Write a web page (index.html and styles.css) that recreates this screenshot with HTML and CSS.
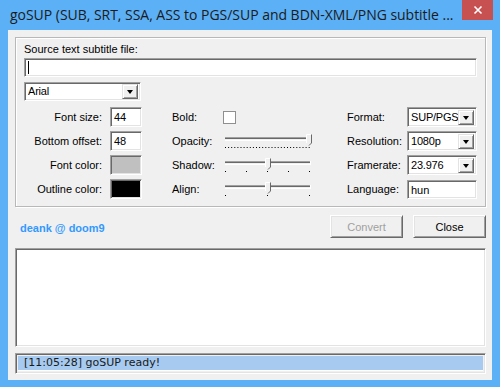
FILE: index.html
```html
<!DOCTYPE html>
<html>
<head>
<meta charset="utf-8">
<link rel="stylesheet" href="styles.css">
</head>
<body>
<div class="window">
  <div class="titlebar">
    <div class="title">goSUP (SUB, SRT, SSA, ASS to PGS/SUP and BDN-XML/PNG subtitle ...</div>
    <div class="close-btn">
      <svg width="10" height="10" viewBox="0 0 10 10"><path d="M1.5 1.5 L8.5 8.5 M8.5 1.5 L1.5 8.5" stroke="#fff" stroke-width="1.6"/></svg>
    </div>
  </div>
  <div class="client">
    <div class="group">
      <div class="src-label">Source text subtitle file:</div>
      <div class="sunken src-input"><span class="caret"></span></div>
      <div class="sunken combo font-combo"><span class="combo-text">Arial</span><span class="combo-btn"><span class="tri"></span></span></div>
      <div class="grid">
        <div class="lbl-r">Font size:</div>
        <div class="sunken small-box">44</div>
        <div class="lbl-m">Bold:</div>
        <div class="ctl-m"><div class="checkbox"></div></div>
        <div class="lbl-rr">Format:</div>
        <div class="sunken combo right-combo"><span class="combo-text">SUP/PGS</span><span class="combo-btn"><span class="tri"></span></span></div>

        <div class="lbl-r">Bottom offset:</div>
        <div class="sunken small-box">48</div>
        <div class="lbl-m">Opacity:</div>
        <div class="ctl-m">
          <svg class="slider" width="90" height="18" viewBox="0 0 90 18">
            <line x1="2" y1="3.5" x2="87" y2="3.5" stroke="#a0a0a0"/>
            <line x1="2" y1="4.5" x2="87" y2="4.5" stroke="#696969"/>
            <line x1="2" y1="6.5" x2="87" y2="6.5" stroke="#ffffff"/>
            <line x1="87.5" y1="3" x2="87.5" y2="7" stroke="#ffffff"/>
            <line x1="2" y1="13.5" x2="87" y2="13.5" stroke="#000" stroke-dasharray="1 2.1"/>
            <path d="M83.5 8.5 V0.5 H88 V8.5 L86 10.5 Z" fill="#f0f0f0"/>
            <path d="M83.5 9 V0.5 H88" fill="none" stroke="#ffffff"/>
            <path d="M88.5 0.5 V9 L86 11.5" fill="none" stroke="#696969"/>
          </svg>
        </div>
        <div class="lbl-rr">Resolution:</div>
        <div class="sunken combo right-combo"><span class="combo-text">1080p</span><span class="combo-btn"><span class="tri"></span></span></div>

        <div class="lbl-r">Font color:</div>
        <div class="sunken small-box color-gray"></div>
        <div class="lbl-m">Shadow:</div>
        <div class="ctl-m">
          <svg class="slider" width="90" height="18" viewBox="0 0 90 18">
            <line x1="2" y1="3.5" x2="87" y2="3.5" stroke="#a0a0a0"/>
            <line x1="2" y1="4.5" x2="87" y2="4.5" stroke="#696969"/>
            <line x1="2" y1="6.5" x2="87" y2="6.5" stroke="#ffffff"/>
            <line x1="87.5" y1="3" x2="87.5" y2="7" stroke="#ffffff"/>
            <g fill="#000"><rect x="2" y="13" width="1" height="1"/><rect x="23" y="13" width="1" height="1"/><rect x="44" y="13" width="1" height="1"/><rect x="65" y="13" width="1" height="1"/><rect x="86" y="13" width="1" height="1"/></g>
            <path d="M42.5 8.5 V0.5 H47 V8.5 L45 10.5 Z" fill="#f0f0f0"/>
            <path d="M42.5 9 V0.5 H47" fill="none" stroke="#ffffff"/>
            <path d="M47.5 0.5 V9 L45 11.5" fill="none" stroke="#696969"/>
          </svg>
        </div>
        <div class="lbl-rr">Framerate:</div>
        <div class="sunken combo right-combo"><span class="combo-text">23.976</span><span class="combo-btn"><span class="tri"></span></span></div>

        <div class="lbl-r">Outline color:</div>
        <div class="sunken small-box color-black"></div>
        <div class="lbl-m">Align:</div>
        <div class="ctl-m">
          <svg class="slider" width="90" height="18" viewBox="0 0 90 18">
            <line x1="2" y1="3.5" x2="87" y2="3.5" stroke="#a0a0a0"/>
            <line x1="2" y1="4.5" x2="87" y2="4.5" stroke="#696969"/>
            <line x1="2" y1="6.5" x2="87" y2="6.5" stroke="#ffffff"/>
            <line x1="87.5" y1="3" x2="87.5" y2="7" stroke="#ffffff"/>
            <g fill="#000"><rect x="2" y="13" width="1" height="1"/><rect x="44" y="13" width="1" height="1"/><rect x="86" y="13" width="1" height="1"/></g>
            <path d="M42.5 8.5 V0.5 H47 V8.5 L45 10.5 Z" fill="#f0f0f0"/>
            <path d="M42.5 9 V0.5 H47" fill="none" stroke="#ffffff"/>
            <path d="M47.5 0.5 V9 L45 11.5" fill="none" stroke="#696969"/>
          </svg>
        </div>
        <div class="lbl-rr">Language:</div>
        <div class="sunken lang-input">hun</div>
      </div>
    </div>
    <div class="action-row">
      <div class="link">deank @ doom9</div>
      <div class="btn disabled">Convert</div>
      <div class="btn">Close</div>
    </div>
    <div class="sunken log"></div>
    <div class="status"><div class="status-inner">[11:05:28] goSUP ready!</div></div>
  </div>
</div>
</body>
</html>
```

FILE: styles.css
```css
html, body {
  margin: 0;
  padding: 0;
}
body {
  width: 500px;
  height: 387px;
  background: #5cb0f6;
  font-family: "Liberation Sans", Arial, sans-serif;
  font-size: 11px;
  color: #000;
  overflow: hidden;
}
.window {
  width: 500px;
  height: 387px;
}
.titlebar {
  height: 30px;
  display: flex;
  align-items: flex-start;
}
.title {
  flex: 1;
  padding-left: 10px;
  line-height: 30px;
  font-family: "Open Sans", "Noto Sans", sans-serif;
  font-size: 14px;
  letter-spacing: -0.03px;
  color: #1b1b1b;
  white-space: nowrap;
}
.close-btn {
  width: 31px;
  height: 20px;
  margin-right: 7px;
  background: #c75050;
  display: flex;
  align-items: center;
  justify-content: center;
}
.close-btn svg { display: block; }
.client {
  margin: 0 8px;
  height: 350px;
  background: #f0f0f0;
  padding: 7px 6px 0 7px;
  box-sizing: border-box;
}
.group {
  height: 170px;
  box-sizing: border-box;
  border: 1px solid #b8b8b8;
  box-shadow: inset 1px 1px 0 #fff, 1px 1px 0 #fff;
  padding: 4px 8px 0 8px;
}
.src-label {
  height: 14px;
  line-height: 14px;
  margin-bottom: 2px;
}
.sunken {
  box-sizing: border-box;
  background: #fff;
  border: 1px solid;
  border-color: #a0a0a0 #fff #fff #a0a0a0;
  box-shadow: inset 1px 1px 0 #696969, inset -1px -1px 0 #e3e3e3;
}
.src-input {
  width: 453px;
  height: 19px;
  position: relative;
}
.caret {
  position: absolute;
  left: 3px;
  top: 2px;
  width: 1px;
  height: 13px;
  background: #000;
}
.combo {
  display: flex;
  align-items: center;
  height: 19px;
  padding: 2px;
}
.combo-text {
  flex: 1;
  min-width: 0;
  overflow: hidden;
  padding-left: 1px;
  line-height: 15px;
  white-space: nowrap;
  letter-spacing: -0.2px;
}
.combo-btn {
  flex: none;
  width: 16px;
  height: 15px;
  box-sizing: border-box;
  background: #f0f0f0;
  border: 1px solid;
  border-color: #e3e3e3 #696969 #696969 #e3e3e3;
  box-shadow: inset 1px 1px 0 #fff, inset -1px -1px 0 #a0a0a0;
  display: flex;
  align-items: center;
  justify-content: center;
}
.tri {
  width: 0;
  height: 0;
  border-left: 3.5px solid transparent;
  border-right: 3.5px solid transparent;
  border-top: 4px solid #000;
  margin-top: 1px;
}
.font-combo {
  width: 117px;
  margin-top: 5px;
}
.grid {
  margin-top: 6px;
  display: grid;
  grid-template-columns: 78px 40px 80px 91px 94px 70px;
  grid-auto-rows: 20px;
  row-gap: 4px;
  align-items: center;
}
.lbl-r {
  text-align: right;
  white-space: nowrap;
}
.small-box {
  justify-self: end;
  width: 32px;
  height: 20px;
  padding: 2px 0 0 3px;
  line-height: 15px;
}
.color-gray { background: #c0c0c0; }
.color-black { background: #000; }
.lbl-m {
  padding-left: 30px;
  white-space: nowrap;
}
.ctl-m {
  display: flex;
  align-items: center;
  height: 20px;
}
.checkbox {
  width: 13px;
  height: 13px;
  box-sizing: border-box;
  background: #fff;
  border: 1px solid #8f8f8f;
  margin-left: 1px;
}
.slider {
  display: block;
  margin-left: 1px;
  margin-top: 4px;
}
.lbl-rr {
  padding-left: 34px;
  white-space: nowrap;
}
.right-combo {
  width: 70px;
  height: 20px;
}
.lang-input {
  width: 70px;
  height: 19px;
  padding: 2px 0 0 3px;
  line-height: 14px;
}
.action-row {
  display: flex;
  align-items: center;
  margin-top: 8px;
  height: 23px;
}
.link {
  flex: 1;
  padding-left: 5px;
  font-weight: bold;
  color: #3399ff;
  padding-top: 2px;
}
.btn {
  width: 73px;
  height: 23px;
  box-sizing: border-box;
  background: #f0f0f0;
  border: 1px solid;
  border-color: #fff #696969 #696969 #fff;
  box-shadow: inset 1px 1px 0 #e3e3e3, inset -1px -1px 0 #a0a0a0;
  display: flex;
  align-items: center;
  justify-content: center;
  margin-left: 10px;
}
.btn.disabled {
  color: #a0a0a0;
}
.log {
  margin-top: 10px;
  height: 99px;
}
.status {
  margin-top: 6px;
  height: 21px;
  box-sizing: border-box;
  border: 1px solid;
  border-color: #a0a0a0 #fff #fff #a0a0a0;
  box-shadow: inset 1px 1px 0 #696969, inset -1px -1px 0 #e3e3e3;
  padding: 2px;
}
.status-inner {
  background: #a6caf0;
  border-bottom: 1px solid #fff;
  height: 14px;
  padding-left: 6px;
  line-height: 14px;
  font-family: "DejaVu Sans", sans-serif;
  font-size: 11px;
  color: #1a1a1a;
  white-space: nowrap;
}
```
